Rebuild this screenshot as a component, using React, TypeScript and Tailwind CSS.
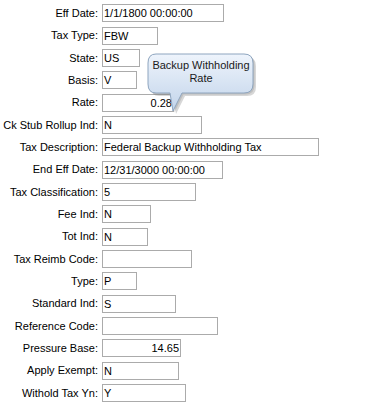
import React from "react";

type Field = { label: string; value: string; width: number; right?: boolean };

const fields: Field[] = [
  { label: "Eff Date:", value: "1/1/1800 00:00:00", width: 122 },
  { label: "Tax Type:", value: "FBW", width: 56 },
  { label: "State:", value: "US", width: 38 },
  { label: "Basis:", value: "V", width: 35 },
  { label: "Rate:", value: "0.28", width: 72, right: true },
  { label: "Ck Stub Rollup Ind:", value: "N", width: 100 },
  { label: "Tax Description:", value: "Federal Backup Withholding Tax", width: 217 },
  { label: "End Eff Date:", value: "12/31/3000 00:00:00", width: 121 },
  { label: "Tax Classification:", value: "5", width: 94 },
  { label: "Fee Ind:", value: "N", width: 49 },
  { label: "Tot Ind:", value: "N", width: 46 },
  { label: "Tax Reimb Code:", value: "", width: 90 },
  { label: "Type:", value: "P", width: 35 },
  { label: "Standard Ind:", value: "S", width: 74 },
  { label: "Reference Code:", value: "", width: 116 },
  { label: "Pressure Base:", value: "14.65", width: 79, right: true },
  { label: "Apply Exempt:", value: "N", width: 77 },
  { label: "Withold Tax Yn:", value: "Y", width: 84 },
];

// speech bubble shape, tail pointing down at the Rate box
const shape =
  "M10 2 H98 Q107 2 107 11 V32 Q107 41 98 41 H36 L27 59 L24 41 H10 Q2 41 2 32 V11 Q2 2 10 2 Z";

function Bubble() {
  return (
    <div className="absolute left-[146px] top-[52px] w-[116px] h-[66px]">
      <svg width="116" height="66" viewBox="0 0 116 66" className="absolute left-0 top-0">
        <defs>
          <linearGradient id="bub" x1="0" y1="0" x2="0" y2="1">
            <stop offset="0" stopColor="#eef4fc" />
            <stop offset="1" stopColor="#c2d4ea" />
          </linearGradient>
        </defs>
        <path d={shape} transform="translate(3 3)" fill="#7a7a7a" opacity="0.3" />
        <path d={shape} transform="translate(1.5 1.5)" fill="#7a7a7a" opacity="0.25" />
        <path d={shape} fill="url(#bub)" stroke="#8ea5bf" strokeWidth="1" />
      </svg>
      <div className="absolute left-[2px] top-[7px] w-[106px] text-center text-[11px] leading-[13px] text-[#1a1a1a]">
        Backup Withholding
        <br />
        Rate
      </div>
    </div>
  );
}

export default function App() {
  return (
    <div
      className="relative w-[372px] h-[419px] bg-white pt-[2px] text-[11px] text-black"
      style={{ fontFamily: '"Liberation Sans", Arial, sans-serif' }}
    >
      {fields.map((f) => (
        <div key={f.label} className="flex items-center h-[22.35px]">
          <div className="w-[98px] text-right whitespace-nowrap">{f.label}</div>
          <div
            className={`ml-[4px] h-[18px] border border-[#ababab] bg-white px-[1px] leading-[16px] whitespace-nowrap overflow-hidden ${
              f.right ? "text-right" : "text-left"
            }`}
            style={{ width: f.width }}
          >
            {f.value}
          </div>
        </div>
      ))}
      <Bubble />
    </div>
  );
}
